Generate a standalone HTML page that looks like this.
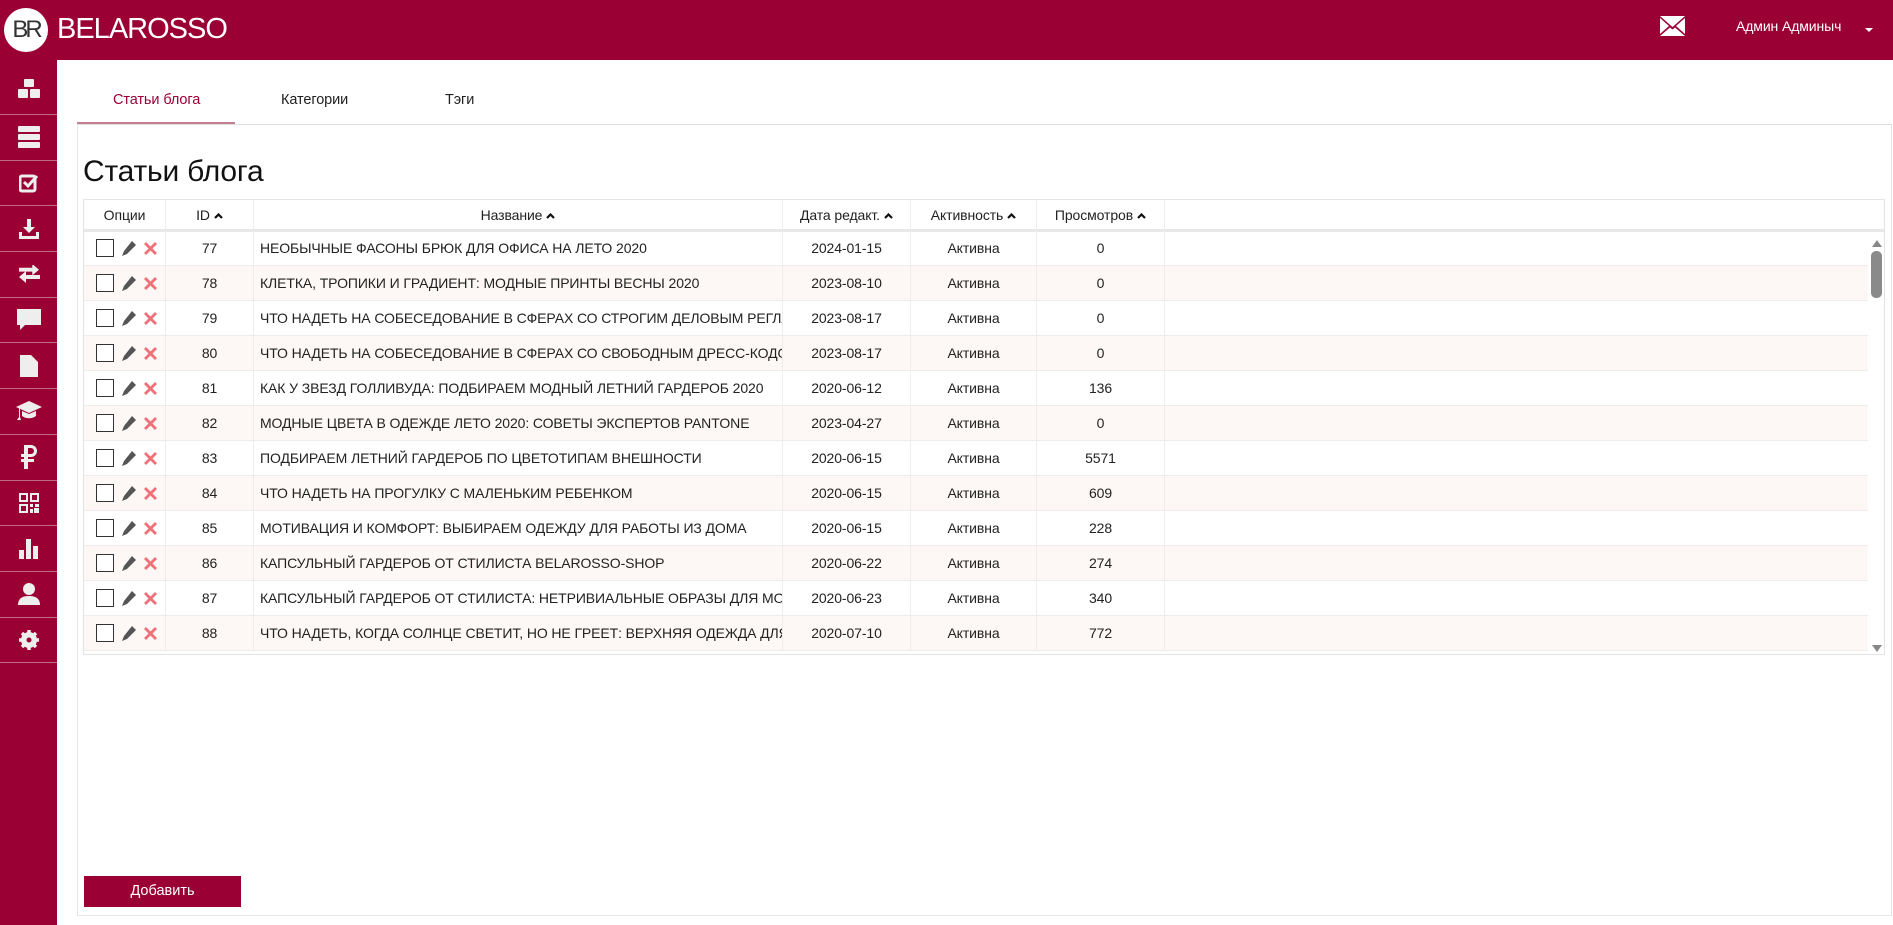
<!DOCTYPE html>
<html><head><meta charset="utf-8"><style>
*{box-sizing:border-box;margin:0;padding:0}
body{width:1893px;height:925px;overflow:hidden;background:#fff;font-family:"Liberation Sans",sans-serif;color:#222;position:relative}
.hdr{position:absolute;left:0;top:0;width:1893px;height:60px;background:#9b0034}
.logo{position:absolute;left:4px;top:8px;width:44px;height:44px;border-radius:50%;background:#fff;color:#333;font-size:24px;line-height:44px;text-align:center;letter-spacing:-3px}
.brand{position:absolute;left:57px;top:13px;color:#fff;font-size:29px;letter-spacing:-1px}
.user{position:absolute;left:1736px;top:18px;color:#fff;font-size:14px;letter-spacing:-0.1px}
.side{position:absolute;left:0;top:60px;width:57px;height:865px;background:#9b0034}
.si{height:45.7px;border-bottom:1px solid #c06a85;display:flex;align-items:center;justify-content:center}
.si.first{height:55px;padding-top:4px}
.tab{position:absolute;top:92px;font-size:14.5px;letter-spacing:-0.1px}
.panel{position:absolute;left:77px;top:124px;width:1815px;height:792px;border:1px solid #e6e6e6;border-top:1px solid #ddd}
h1{position:absolute;left:83px;top:155px;font-weight:normal;font-size:30px;letter-spacing:-0.2px;color:#111}
.tbl{position:absolute;left:83px;top:199px;width:1802px;height:456px;border:1px solid #e3e3e3;overflow:hidden}
.row{position:absolute;left:0;height:35px;width:1784px;border-bottom:1px solid #ececec;font-size:14px;letter-spacing:-0.1px;line-height:34px}
.row.alt{background:#fdf8f5}
.c{position:absolute;top:0;height:100%;border-right:1px solid #f0ece9;text-align:center;white-space:nowrap;overflow:hidden}
.th{height:32px;line-height:31px;border-bottom:3px solid #e8e8e8;background:#fff;width:1800px}
.cb{position:absolute;left:12px;top:8px;width:18px;height:18px;border:1px solid #333;background:#fff}
.btn{position:absolute;left:84px;top:876px;width:157px;height:31px;background:#9b0034;color:#fff;font-size:14.5px;text-align:center;line-height:31px}
.ar{display:inline-block;width:9px;height:6px;margin-left:4px;vertical-align:1px}
</style></head><body>
<div class="hdr">
<div class="logo">BR</div>
<div class="brand">BELAROSSO</div>
<svg style="position:absolute;left:1660px;top:16px" width="25" height="20" viewBox="0 0 25 20"><path d="M0 0H25L12.5 11Z M0 2L9 10L0 18Z M25 2L16 10L25 18Z M0 20L10 11.5L12.5 13.5L15 11.5L25 20Z" fill="#fff"/></svg>
<div class="user">Админ Админыч</div>
<div style="position:absolute;left:1865px;top:28px;border-left:4px solid transparent;border-right:4px solid transparent;border-top:4px solid #fff"></div>
</div>
<div class="side">
<div class="si first"><svg width="22" height="20" viewBox="0 0 22 20" fill="#eee"><rect x="6" y="0" width="10" height="8" rx="1"/><rect x="0" y="10" width="10" height="9" rx="1"/><rect x="12" y="10" width="10" height="9" rx="1"/></svg></div>
<div class="si"><svg width="22" height="22" viewBox="0 0 22 22" fill="#eee"><rect y="0" width="22" height="6" rx="1"/><rect y="8" width="22" height="6" rx="1"/><rect y="16" width="22" height="6" rx="1"/></svg></div>
<div class="si"><svg width="20" height="20" viewBox="0 0 20 20"><rect x="1" y="3" width="15" height="15" rx="2" fill="none" stroke="#eee" stroke-width="3"/><path d="M5 9l4 4 9-10" fill="none" stroke="#eee" stroke-width="3"/></svg></div>
<div class="si"><svg width="20" height="20" viewBox="0 0 20 20" fill="#eee"><path d="M8 0h4v8h4l-6 6-6-6h4z"/><path d="M0 13h3v4h14v-4h3v7H0z"/></svg></div>
<div class="si"><svg width="22" height="18" viewBox="0 0 22 18" fill="#eee"><path d="M0 4h14V0l7 6-7 6V8H0z" transform="translate(1,-1) scale(.95)"/><path d="M22 14H8v4l-7-6 7-6v4h14z"/></svg></div>
<div class="si"><svg width="24" height="22" viewBox="0 0 24 22" fill="#eee"><path d="M0 0h24v16H8l-5 5v-5H0z"/></svg></div>
<div class="si"><svg width="18" height="22" viewBox="0 0 18 22" fill="#eee"><path d="M0 0h11l7 7v15H0z"/></svg></div>
<div class="si"><svg width="26" height="20" viewBox="0 0 26 20" fill="#eee"><path d="M13 0L26 6 13 12 0 6z"/><path d="M6 10v5c4 3 10 3 14 0v-5l-7 3z"/><path d="M3 7v9l-2 3h4l-1-3V7z"/></svg></div>
<div class="si"><svg width="18" height="24" viewBox="0 0 18 24" fill="#eee"><path d="M4 0h7a6 6 0 010 12H8v2h6v3H8v7H4v-7H1v-3h3v-2H1V9h3zm4 3v6h3a3 3 0 000-6z"/></svg></div>
<div class="si"><svg width="20" height="20" viewBox="0 0 20 20" fill="#eee"><path d="M0 0h9v9H0zM2 2v5h5V2zM11 0h9v9h-9zm2 2v5h5V2zM0 11h9v9H0zm2 2v5h5v-5zM11 11h3v3h-3zM16 11h4v3h-4zM11 16h3v4h-3zM15 15h5v5h-5z"/></svg></div>
<div class="si"><svg width="20" height="20" viewBox="0 0 20 20" fill="#eee"><rect x="0" y="11" width="5" height="9"/><rect x="7" y="0" width="5" height="20"/><rect x="14" y="7" width="5" height="13"/></svg></div>
<div class="si"><svg width="22" height="22" viewBox="0 0 22 22" fill="#eee"><circle cx="11" cy="6" r="6"/><path d="M0 22c0-7 5-9 11-9s11 2 11 9z"/></svg></div>
<div class="si"><svg width="20" height="20" viewBox="0 0 20 20"><circle cx="10" cy="10" r="6" fill="none" stroke="#eee" stroke-width="4"/><g stroke="#eee" stroke-width="3.5"><path d="M10 0v20M0 10h20M3 3l14 14M17 3L3 17"/></g><circle cx="10" cy="10" r="2.5" fill="#9b0034"/></svg></div>
</div>
<div class="tab" style="left:113px;color:#9b0034">Статьи блога</div>
<div style="position:absolute;left:77px;top:122px;width:158px;height:3px;background:#c48090"></div>
<div class="tab" style="left:281px">Категории</div>
<div class="tab" style="left:445px">Тэги</div>
<div class="panel"></div>
<h1>Статьи блога</h1>
<div class="tbl">
<div class="row th" id="th">
<div class="c" style="left:0;width:82px">Опции</div>
<div class="c" style="left:82px;width:88px">ID<svg class="ar" viewBox="0 0 9 6"><path d="M1 5l3.5-3.5L8 5" fill="none" stroke="#111" stroke-width="2.2"/></svg></div>
<div class="c" style="left:170px;width:529px">Название<svg class="ar" viewBox="0 0 9 6"><path d="M1 5l3.5-3.5L8 5" fill="none" stroke="#111" stroke-width="2.2"/></svg></div>
<div class="c" style="left:699px;width:128px">Дата редакт.<svg class="ar" viewBox="0 0 9 6"><path d="M1 5l3.5-3.5L8 5" fill="none" stroke="#111" stroke-width="2.2"/></svg></div>
<div class="c" style="left:827px;width:126px">Активность<svg class="ar" viewBox="0 0 9 6"><path d="M1 5l3.5-3.5L8 5" fill="none" stroke="#111" stroke-width="2.2"/></svg></div>
<div class="c" style="left:953px;width:128px">Просмотров<svg class="ar" viewBox="0 0 9 6"><path d="M1 5l3.5-3.5L8 5" fill="none" stroke="#111" stroke-width="2.2"/></svg></div>
</div>
<div id="rows"></div>
<div style="position:absolute;left:1788px;top:40px;width:0;height:0;border-left:5px solid transparent;border-right:5px solid transparent;border-bottom:7px solid #888"></div>
<div style="position:absolute;left:1787px;top:51px;width:11px;height:47px;border-radius:5px;background:#8a8a8a"></div>
<div style="position:absolute;left:1788px;top:445px;width:0;height:0;border-left:5px solid transparent;border-right:5px solid transparent;border-top:7px solid #888"></div>
</div>
<div class="btn">Добавить</div>
<script>
var d=[["77","НЕОБЫЧНЫЕ ФАСОНЫ БРЮК ДЛЯ ОФИСА НА ЛЕТО 2020","2024-01-15","0"],["78","КЛЕТКА, ТРОПИКИ И ГРАДИЕНТ: МОДНЫЕ ПРИНТЫ ВЕСНЫ 2020","2023-08-10","0"],["79","ЧТО НАДЕТЬ НА СОБЕСЕДОВАНИЕ В СФЕРАХ СО СТРОГИМ ДЕЛОВЫМ РЕГЛАМЕНТОМ","2023-08-17","0"],["80","ЧТО НАДЕТЬ НА СОБЕСЕДОВАНИЕ В СФЕРАХ СО СВОБОДНЫМ ДРЕСС-КОДОМ","2023-08-17","0"],["81","КАК У ЗВЕЗД ГОЛЛИВУДА: ПОДБИРАЕМ МОДНЫЙ ЛЕТНИЙ ГАРДЕРОБ 2020","2020-06-12","136"],["82","МОДНЫЕ ЦВЕТА В ОДЕЖДЕ ЛЕТО 2020: СОВЕТЫ ЭКСПЕРТОВ PANTONE","2023-04-27","0"],["83","ПОДБИРАЕМ ЛЕТНИЙ ГАРДЕРОБ ПО ЦВЕТОТИПАМ ВНЕШНОСТИ","2020-06-15","5571"],["84","ЧТО НАДЕТЬ НА ПРОГУЛКУ С МАЛЕНЬКИМ РЕБЕНКОМ","2020-06-15","609"],["85","МОТИВАЦИЯ И КОМФОРТ: ВЫБИРАЕМ ОДЕЖДУ ДЛЯ РАБОТЫ ИЗ ДОМА","2020-06-15","228"],["86","КАПСУЛЬНЫЙ ГАРДЕРОБ ОТ СТИЛИСТА BELAROSSO-SHOP","2020-06-22","274"],["87","КАПСУЛЬНЫЙ ГАРДЕРОБ ОТ СТИЛИСТА: НЕТРИВИАЛЬНЫЕ ОБРАЗЫ ДЛЯ МОДНИЦ","2020-06-23","340"],["88","ЧТО НАДЕТЬ, КОГДА СОЛНЦЕ СВЕТИТ, НО НЕ ГРЕЕТ: ВЕРХНЯЯ ОДЕЖДА ДЛЯ ВЕСНЫ","2020-07-10","772"]];
var h="";
d.forEach(function(r,i){
h+='<div class="row'+(i%2?' alt':'')+'" style="top:'+(31+i*35)+'px">'+
'<div class="c" style="left:0;width:82px"><div class="cb"></div>'+
'<svg style="position:absolute;left:37px;top:10px" width="15" height="15" viewBox="0 0 15 15"><path d="M11 0l4 4-9 9-5 2 2-5z" fill="#555"/></svg>'+
'<svg style="position:absolute;left:60px;top:11px" width="13" height="13" viewBox="0 0 13 13"><path d="M2 0l4.5 4.5L11 0l2 2-4.5 4.5L13 11l-2 2-4.5-4.5L2 13 0 11l4.5-4.5L0 2z" fill="#f0707a"/></svg></div>'+
'<div class="c" style="left:82px;width:88px">'+r[0]+'</div>'+
'<div class="c" style="left:170px;width:529px;text-align:left;padding-left:6px">'+r[1]+'</div>'+
'<div class="c" style="left:699px;width:128px">'+r[2]+'</div>'+
'<div class="c" style="left:827px;width:126px">Активна</div>'+
'<div class="c" style="left:953px;width:128px">'+r[3]+'</div></div>';
});
document.getElementById("rows").innerHTML=h;
</script>
</body></html>
